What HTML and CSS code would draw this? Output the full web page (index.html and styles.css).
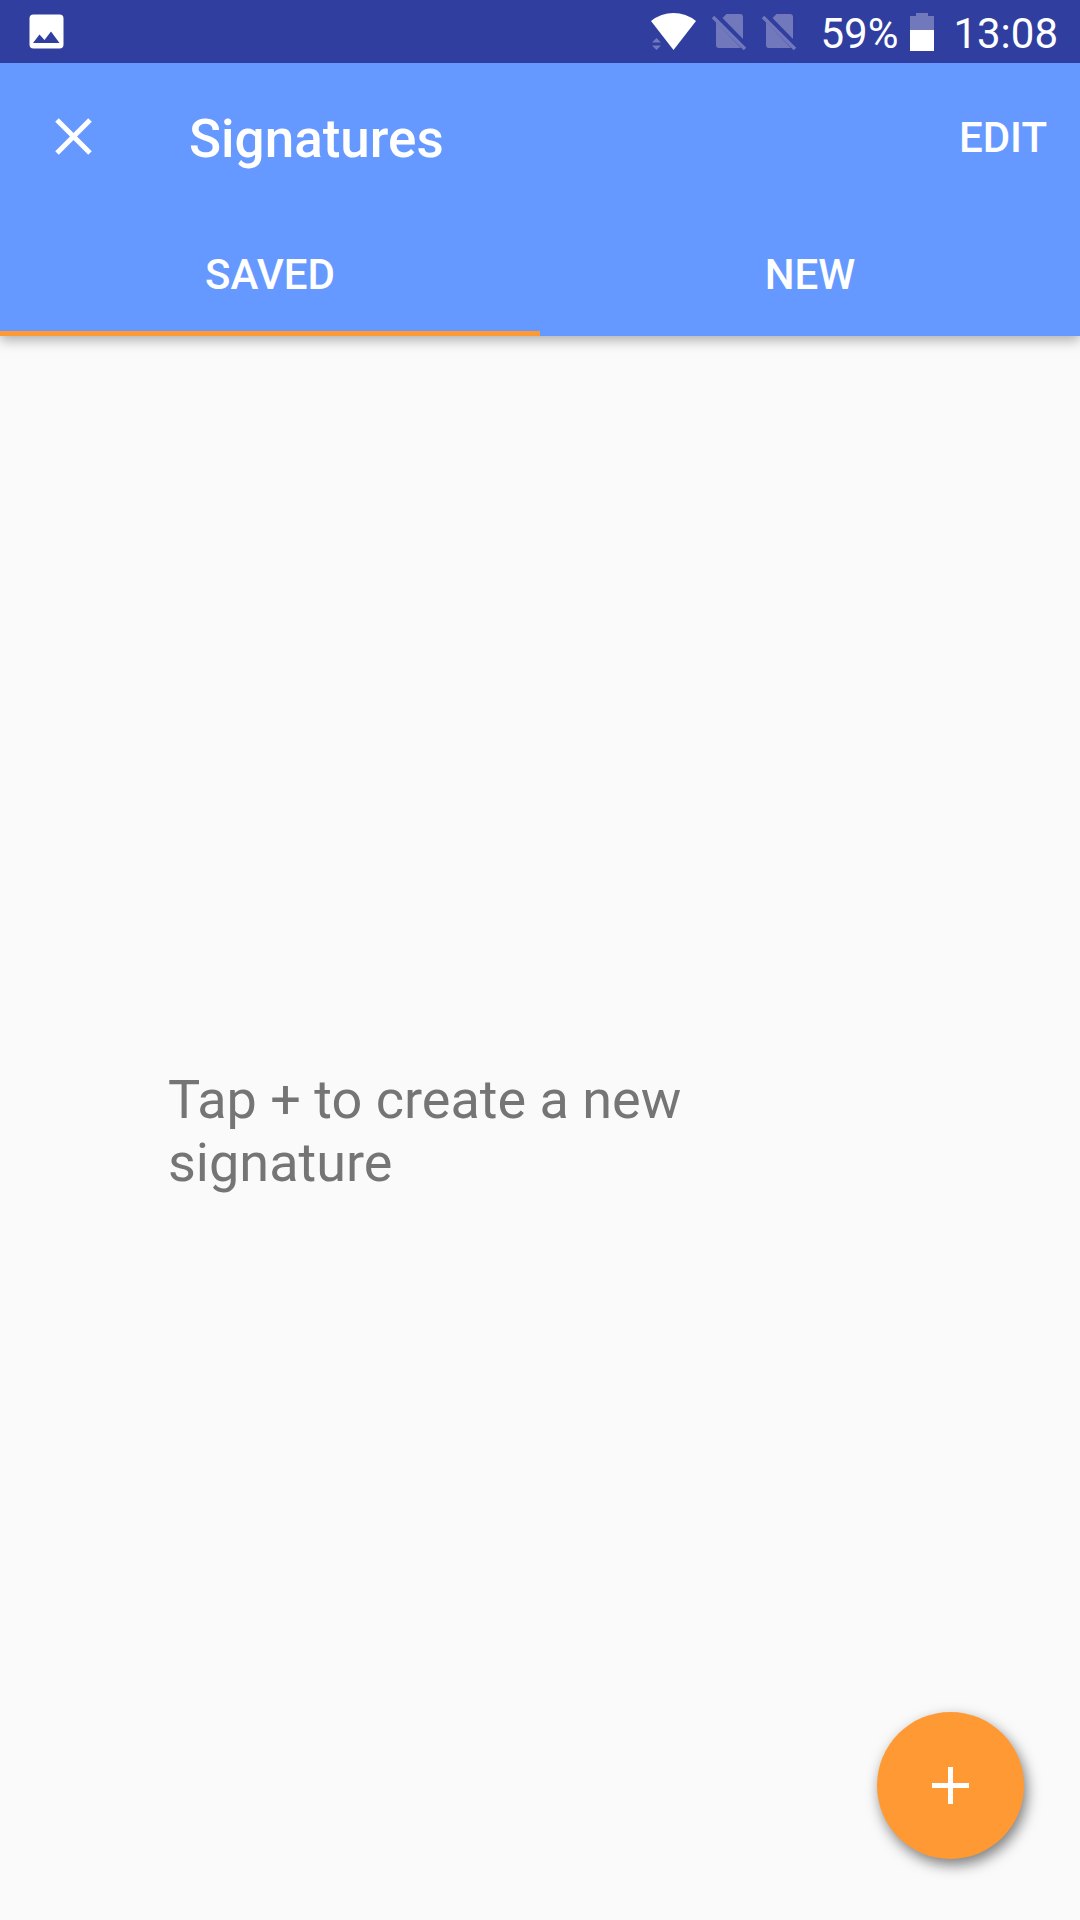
FILE: index.html
```html
<!DOCTYPE html>
<html lang="en">
<head>
  <meta charset="utf-8">
  <meta name="viewport" content="width=device-width, initial-scale=1">
  <title>Signatures</title>
  <link rel="stylesheet" href="styles.css">
</head>
<body>
  <header class="app-header">
    <div class="status-bar">
      <svg class="icon-picture" width="36" height="36" viewBox="0 0 36 36" aria-hidden="true">
        <rect x="0.5" y="0.5" width="34" height="34" rx="4" fill="#fff"/>
        <path d="M4 29 10.500 20.500 15.500 26 22 17.500 30.500 29Z" fill="#303f9f"/>
      </svg>
      <div class="status-icons">
        <svg class="icon-wifi" width="47" height="40" viewBox="0 0 47 40" aria-hidden="true">
          <path d="M1 9Q11 1 23.500 1T46 9L23.500 38Z" fill="#fff"/>
          <path d="M2 30.500 6.500 26 11 30.500ZM2 33.500H11L6.500 38Z" fill="#7179bc"/>
        </svg>
        <svg class="icon-sim" width="36" height="40" viewBox="0 0 36 40" aria-hidden="true">
          <path d="M11.500 6 15.500 2H29Q32 2 32 5V27ZM5 10 30 36H8Q5 36 5 33Z" fill="#7179bc"/>
          <path d="M2 5 34 37" stroke="#7179bc" stroke-width="3.500"/>
        </svg>
        <svg class="icon-sim" width="36" height="40" viewBox="0 0 36 40" aria-hidden="true">
          <path d="M11.500 6 15.500 2H29Q32 2 32 5V27ZM5 10 30 36H8Q5 36 5 33Z" fill="#7179bc"/>
          <path d="M2 5 34 37" stroke="#7179bc" stroke-width="3.500"/>
        </svg>
      </div>
      <span class="status-text">59%</span>
      <svg class="icon-battery" width="24" height="38" viewBox="0 0 24 38" aria-hidden="true">
        <path d="M6 0H18V3H24V17H0V3H6Z" fill="#7179bc"/>
        <path d="M0 17H24V38H0Z" fill="#fff"/>
      </svg>
      <span class="status-text">13:08</span>
    </div>
    <div class="toolbar">
      <button class="close-button" type="button" aria-label="Close">
        <svg width="37" height="37" viewBox="0 0 37 37" aria-hidden="true">
          <path d="M2 2 35 35M35 2 2 35" stroke="#fff" stroke-width="5"/>
        </svg>
      </button>
      <h1 class="title">Signatures</h1>
      <button class="edit-button" type="button">EDIT</button>
    </div>
    <div class="tabs" role="tablist">
      <button class="tab tab-active" type="button" role="tab" aria-selected="true">SAVED</button>
      <button class="tab" type="button" role="tab" aria-selected="false">NEW</button>
    </div>
  </header>
  <main class="content">
    <p class="empty-message">Tap + to create a new signature</p>
  </main>
  <button class="add-button" type="button" aria-label="New signature">
    <svg width="37" height="37" viewBox="0 0 37 37" aria-hidden="true">
      <path d="M16 0H21V16H37V21H21V37H16V21H0V16H16Z" fill="#fff"/>
    </svg>
  </button>
</body>
</html>
```
FILE: styles.css
```css
*,
*::before,
*::after {
  box-sizing: border-box;
}

body {
  margin: 0;
  min-height: 100vh;
  display: flex;
  flex-direction: column;
  background: #fafafa;
  color: #fff;
  font-family: Roboto, "Liberation Sans", sans-serif;
  font-size: 42px;
}

button {
  margin: 0;
  padding: 0;
  border: 0;
  background: none;
  color: inherit;
  font: inherit;
  font-weight: 500;
  cursor: pointer;
}

svg {
  display: block;
  flex: none;
}

.app-header {
  background: #6699ff;
  box-shadow: 0 4px 12px rgba(0, 0, 0, 0.32);
}

.status-bar {
  display: flex;
  align-items: center;
  height: 63px;
  padding: 0 22px 0 29px;
  background: #303f9f;
}

.status-icons {
  display: flex;
  gap: 14px;
  margin-left: auto;
  margin-right: 23px;
}

.status-text {
  padding-top: 4px;
  line-height: 48px;
}

.icon-battery {
  margin: 0 19px 0 12px;
}

.toolbar {
  display: flex;
  align-items: center;
  height: 147px;
  padding-right: 33px;
}

.close-button {
  display: grid;
  place-items: center;
  width: 147px;
  height: 147px;
}

.title {
  flex: 1;
  margin: 0;
  padding: 4px 0 0 42px;
  font-size: 53px;
  font-weight: 500;
  line-height: 64px;
}

.edit-button {
  height: 100%;
  padding-top: 2px;
}

.tabs {
  display: grid;
  grid-template-columns: 1fr 1fr;
}

.tab {
  height: 126px;
  padding-top: 8px;
  border-bottom: 5px solid transparent;
}

.tab-active {
  border-bottom-color: #ff9933;
}

.content {
  flex: 1;
  display: flex;
  align-items: center;
  padding: 6px 168px 0;
}

.empty-message {
  max-width: 700px;
  margin: 0;
  color: #757575;
  font-size: 54px;
  line-height: 63px;
}

.add-button {
  position: fixed;
  right: 56px;
  bottom: 61px;
  display: grid;
  place-items: center;
  width: 147px;
  height: 147px;
  border-radius: 50%;
  background: #ff9933;
  box-shadow: 3px 6px 14px rgba(0, 0, 0, 0.5);
}
```
